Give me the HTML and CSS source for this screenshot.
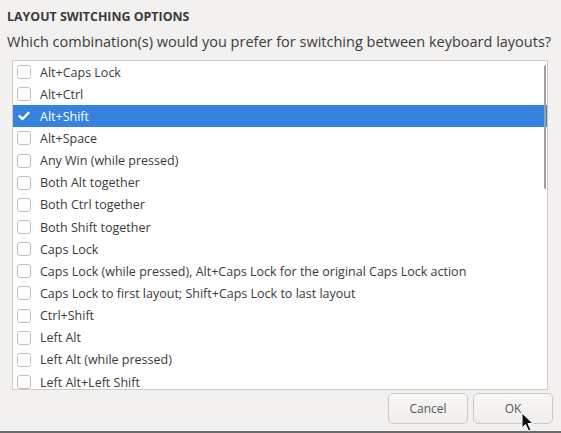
FILE: index.html
```html
<!DOCTYPE html>
<html>
<head>
<meta charset="utf-8">
<link rel="stylesheet" href="styles.css">
</head>
<body>
<div class="dialog">
  <div class="title">LAYOUT SWITCHING OPTIONS</div>
  <div class="subtitle">Which combination(s) would you prefer for switching between keyboard layouts?</div>
  <div class="listbox">
    <div class="row"><span class="box"></span><span class="label">Alt+Caps Lock</span></div>
    <div class="row"><span class="box"></span><span class="label">Alt+Ctrl</span></div>
    <div class="row selected"><span class="box checked"><svg width="12" height="10" viewBox="0 0 12 10"><path d="M1.5 5.2 L4.5 8 L10.5 1.8" fill="none" stroke="#fff" stroke-width="2.4" stroke-linecap="round" stroke-linejoin="round"/></svg></span><span class="label">Alt+Shift</span></div>
    <div class="row"><span class="box"></span><span class="label">Alt+Space</span></div>
    <div class="row"><span class="box"></span><span class="label">Any Win (while pressed)</span></div>
    <div class="row"><span class="box"></span><span class="label">Both Alt together</span></div>
    <div class="row"><span class="box"></span><span class="label">Both Ctrl together</span></div>
    <div class="row"><span class="box"></span><span class="label">Both Shift together</span></div>
    <div class="row"><span class="box"></span><span class="label">Caps Lock</span></div>
    <div class="row"><span class="box"></span><span class="label">Caps Lock (while pressed), Alt+Caps Lock for the original Caps Lock action</span></div>
    <div class="row"><span class="box"></span><span class="label">Caps Lock to first layout; Shift+Caps Lock to last layout</span></div>
    <div class="row"><span class="box"></span><span class="label">Ctrl+Shift</span></div>
    <div class="row"><span class="box"></span><span class="label">Left Alt</span></div>
    <div class="row"><span class="box"></span><span class="label">Left Alt (while pressed)</span></div>
    <div class="row"><span class="box"></span><span class="label">Left Alt+Left Shift</span></div>
    <div class="scrollbar"></div>
  </div>
  <div class="footer">
    <button class="btn">Cancel</button>
    <button class="btn">OK</button>
  </div>
  <svg class="cursor" width="14" height="20" viewBox="0 0 14 20"><path d="M1 1 L1 16 L4.5 12.5 L7.5 19 L10 18 L7 11.5 L12 11.5 Z" fill="#111" stroke="#fff" stroke-width="1"/></svg>
</div>
</body>
</html>
```
FILE: styles.css
```css
html, body {
  margin: 0;
  padding: 0;
}
body {
  width: 561px;
  height: 433px;
  overflow: hidden;
  background: #f2f1f0;
  font-family: "Open Sans", "Noto Sans", sans-serif;
  color: #2e3436;
}
.dialog {
  position: relative;
  height: 431px;
  border-bottom: 2px solid #6b6b6b;
  display: flex;
  flex-direction: column;
  padding: 0 8px 0 7px;
}
.title {
  margin-top: 9px;
  font-size: 12.4px;
  line-height: 16px;
  font-weight: 700;
  color: #3a3a3a;
}
.subtitle {
  margin-top: 7px;
  font-size: 14.5px;
  line-height: 20px;
  color: #3a3a3a;
  white-space: nowrap;
}
.listbox {
  position: relative;
  margin: 8px 5px 0 5px;
  height: 330px;
  box-sizing: border-box;
  border: 1px solid #cfcac5;
  background: #fff;
  overflow: hidden;
}
.row {
  height: 22.15px;
  display: flex;
  align-items: center;
  font-size: 12.5px;
  color: #3a3a3a;
  white-space: nowrap;
}
.row.selected {
  background: #3583df;
  color: #fff;
}
.box {
  width: 12px;
  height: 12px;
  margin-left: 4px;
  margin-right: 9px;
  border: 1px solid #c4bfba;
  border-radius: 3px;
  background: #fff;
  display: flex;
  align-items: center;
  justify-content: center;
  flex: none;
}
.box.checked {
  background: #3583df;
  border-color: #3583df;
}
.label {
  line-height: 13px;
}
.scrollbar {
  position: absolute;
  right: 1px;
  top: 4px;
  width: 2px;
  height: 124px;
  background: #9e9e9e;
  border-radius: 1px;
}
.footer {
  display: flex;
  justify-content: flex-end;
  gap: 5px;
  margin-top: 3px;
}
.btn {
  width: 80px;
  height: 31px;
  border: 1px solid #cdc7c2;
  border-radius: 5px;
  background: linear-gradient(#f8f7f6, #efeeec);
  font-family: "Open Sans", "Noto Sans", sans-serif;
  font-size: 12px;
  color: #555;
  padding: 0;
}
.cursor {
  position: absolute;
  left: 521px;
  top: 412px;
}
```
